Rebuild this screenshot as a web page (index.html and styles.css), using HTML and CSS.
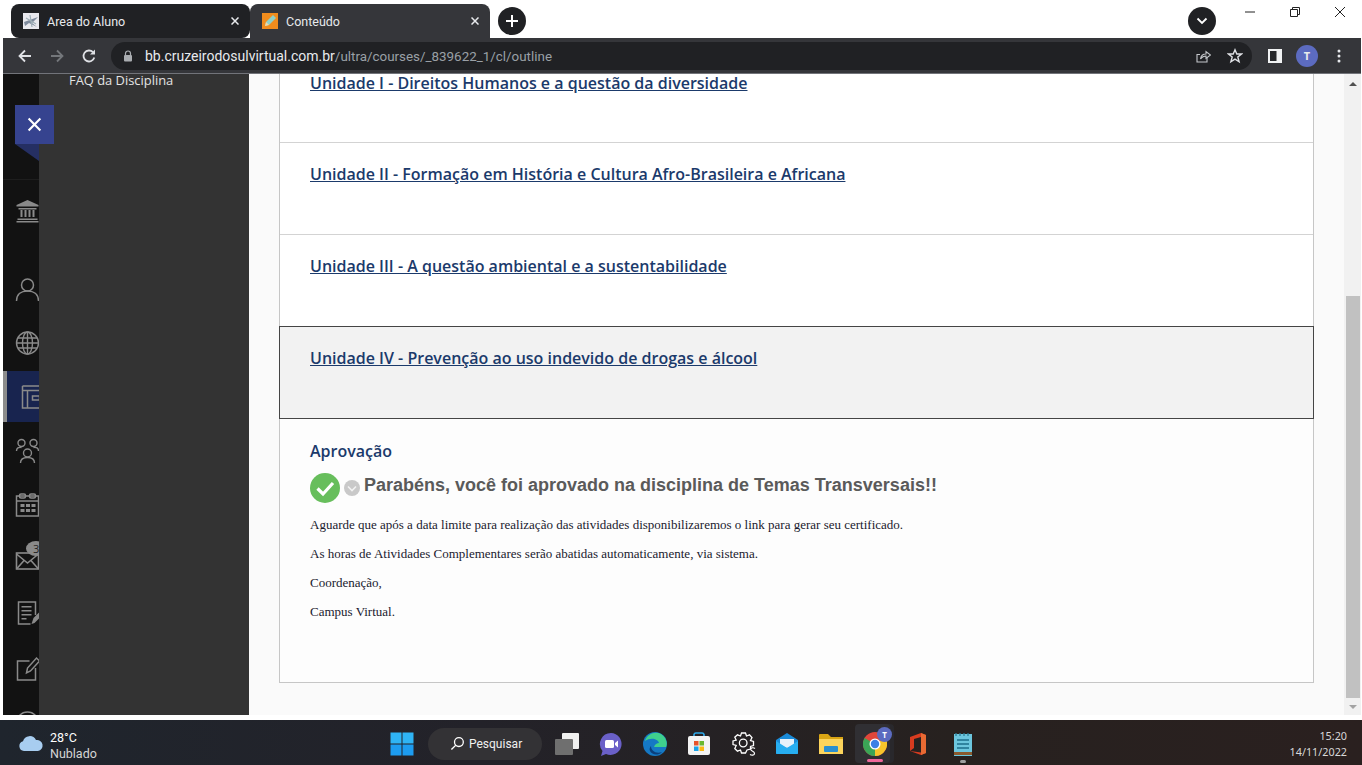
FILE: index.html
```html
<!DOCTYPE html>
<html lang="pt-BR">
<head>
<meta charset="utf-8">
<title>Conteúdo</title>
<link rel="stylesheet" href="styles.css">
</head>
<body>
<div class="tabstrip">
  <div class="tab tab-dark">
    <svg class="favicon" viewBox="0 0 16 16"><rect width="16" height="16" fill="#e9e9ee"/><path d="M1 9 L15 4 L9 10 L14 14 L6 10 L2 13Z" fill="#7e8a9c"/><path d="M7 2 L9 14 M3 5 L13 11" stroke="#9fb0b8" stroke-width="1.2"/></svg>
    <span class="tab-title">Area do Aluno</span>
    <svg class="tab-close" viewBox="0 0 8 8"><path d="M0.500 0.500L7.500 7.500M7.500 0.500L0.500 7.500" stroke="#e8eaed" stroke-width="1.500"/></svg>
  </div>
  <div class="tab tab-active">
    <svg class="favicon" viewBox="0 0 16 16"><rect width="16" height="16" fill="#f08c1d"/><path d="M3 13 L4 9 L11 2 L14 5 L7 12Z" fill="#8fd0c8"/><path d="M3 13 L4 9 L7 12Z" fill="#f6d7a0"/></svg>
    <span class="tab-title">Conteúdo</span>
    <svg class="tab-close" viewBox="0 0 8 8"><path d="M0.500 0.500L7.500 7.500M7.500 0.500L0.500 7.500" stroke="#e8eaed" stroke-width="1.500"/></svg>
  </div>
  <div class="newtab"><svg viewBox="0 0 14 14" width="14" height="14"><path d="M7 1V13M1 7H13" stroke="#fff" stroke-width="2"/></svg></div>
  <div class="strip-spacer"></div>
  <div class="tabsearch"><svg viewBox="0 0 12 8" width="12" height="8"><path d="M1.500 1.500 L6 6 L10.500 1.500" fill="none" stroke="#fff" stroke-width="1.800"/></svg></div>
  <div class="winctl">
    <svg viewBox="0 0 12 12" width="12" height="12"><path d="M1 6H11" stroke="#222" stroke-width="1"/></svg>
    <svg viewBox="0 0 12 12" width="12" height="12"><path d="M1.500 3.500H8.500V10.500H1.500Z M3.500 3.500V1.500H10.500V8.500H8.500" fill="none" stroke="#222" stroke-width="1"/></svg>
    <svg viewBox="0 0 12 12" width="12" height="12"><path d="M1 1L11 11M11 1L1 11" stroke="#222" stroke-width="1"/></svg>
  </div>
</div>

<div class="toolbar">
  <svg class="nav" viewBox="0 0 16 16"><path d="M14 8H2.500M8 2.500L2.500 8L8 13.500" fill="none" stroke="#dfe1e5" stroke-width="1.800"/></svg>
  <svg class="nav" viewBox="0 0 16 16"><path d="M2 8H13.500M8 2.500L13.500 8L8 13.500" fill="none" stroke="#74777b" stroke-width="1.800"/></svg>
  <svg class="nav" viewBox="0 0 16 16"><path d="M13.300 9.500A5.500 5.500 0 1 1 12 4.200" fill="none" stroke="#dfe1e5" stroke-width="1.800"/><path d="M14 1.500V6.500H9Z" fill="#dfe1e5"/></svg>
  <div class="omnibox">
    <svg class="lock" viewBox="0 0 10 12"><path d="M2.500 5V3.500A2.500 2.500 0 0 1 7.500 3.500V5" fill="none" stroke="#aaadb1" stroke-width="1.200"/><rect x="1" y="5" width="8" height="6.500" rx="1" fill="#aaadb1"/></svg>
    <span class="url"><span class="url-host">bb.cruzeirodosulvirtual.com.br</span><span class="url-path">/ultra/courses/_839622_1/cl/outline</span></span>
    <span class="omni-spacer"></span>
    <svg class="omni-icon" viewBox="0 0 16 16"><path d="M12 9.500V14H2V6.500H5" fill="none" stroke="#c4c7cb" stroke-width="1.100"/><path d="M5.500 11C6 7.500 8.500 6 11 6V3.500L15.500 7L11 10.500V8C9 8 7 9 5.500 11Z" fill="none" stroke="#c4c7cb" stroke-width="1.100"/></svg>
    <svg class="omni-icon" viewBox="0 0 16 16"><path d="M8 1.800L9.800 6H14.500L10.800 9L12.100 13.800L8 11.200L3.900 13.800L5.200 9L1.500 6H6.200Z" fill="none" stroke="#dfe1e5" stroke-width="1.400"/></svg>
  </div>
  <svg class="side-icon" viewBox="0 0 14 14"><rect width="14" height="14" fill="#f1f3f4"/><rect x="2" y="2" width="6.500" height="10" fill="#26282b"/></svg>
  <div class="avatar">T</div>
  <svg class="kebab" viewBox="0 0 4 14"><circle cx="2" cy="2" r="1.500"/><circle cx="2" cy="7" r="1.500"/><circle cx="2" cy="12" r="1.500"/></svg>
</div>

<div class="main">
  <nav class="rail">
    <div class="rail-toggle">
      <div class="close-flag"><svg viewBox="0 0 14 14" width="15" height="15"><path d="M1.500 1.500L12.500 12.500M12.500 1.500L1.500 12.500" stroke="#fff" stroke-width="2"/></svg></div>
      <div class="flag-tail"></div>
    </div>
    <div class="rail-item r-bank"><svg viewBox="0 0 24 24"><path d="M12 1L23 6V7.500H1V6Z M3 9H21V10.500H3Z M5 11H7V18H5Z M9 11H11V18H9Z M13 11H15V18H13Z M17 11H19V18H17Z M2 19.500H22V21H2Z M1 22H23V23.500H1Z" fill="#8a8a8a"/></svg></div>
    <div class="rail-item r-person"><svg viewBox="0 0 24 24"><circle cx="12" cy="8" r="6" fill="none" stroke="#8a8a8a" stroke-width="1.500"/><path d="M1 24C1 17 6 14 12 14S23 17 23 24" fill="none" stroke="#8a8a8a" stroke-width="1.500"/></svg></div>
    <div class="rail-item r-globe"><svg viewBox="0 0 24 24"><g fill="none" stroke="#8a8a8a" stroke-width="1.400"><circle cx="12" cy="12" r="11"/><ellipse cx="12" cy="12" rx="5" ry="11"/><path d="M12 1V23M1 12H23M2.500 7H21.500M2.500 17H21.500"/></g></svg></div>
    <div class="rail-item rail-active"><svg viewBox="0 0 24 24"><g fill="none" stroke="#8a8a8a" stroke-width="1.500"><path d="M1 1H23M1 5.500H23M1 1V23H23M6 5.500V23M21 5.500V23"/><rect x="11" y="11" width="7" height="4"/></g></svg></div>
    <div class="rail-item r-people"><svg viewBox="0 0 24 24"><g fill="none" stroke="#8a8a8a" stroke-width="1.400"><circle cx="6" cy="4" r="3.500"/><circle cx="18" cy="4" r="3.500"/><circle cx="12" cy="14" r="4"/><path d="M1 12C1 9 3 8 6 8.500M23 12C23 9 21 8 18 8.500M5 24C5 20 8 18.500 12 18.500S19 20 19 24"/></g></svg></div>
    <div class="rail-item r-cal"><svg viewBox="0 0 24 24"><g fill="none" stroke="#8a8a8a" stroke-width="1.500"><rect x="1" y="3" width="22" height="20"/><path d="M1 8H23"/><rect x="4" y="1" width="6" height="4" rx="1.500"/><rect x="14" y="1" width="6" height="4" rx="1.500"/></g><path d="M5 11H9V14H5Z M10.500 11H14.500V14H10.500Z M16 11H20V14H16Z M5 16H9V19H5Z M10.500 16H14.500V19H10.500Z M16 16H20V19H16Z" fill="#8a8a8a"/></svg></div>
    <div class="rail-item r-mail"><svg viewBox="0 0 24 24"><g fill="none" stroke="#8a8a8a" stroke-width="1.600"><rect x="1" y="6" width="22" height="16"/><path d="M1 7L12 16L23 7M1 22L9 13M23 22L15 13"/></g></svg><span class="badge">3</span></div>
    <div class="rail-item r-note"><svg viewBox="0 0 24 24"><g fill="none" stroke="#8a8a8a" stroke-width="1.500"><path d="M20 14V1H3V23H15"/></g><path d="M6 5H16V6.500H6Z M6 9H16V10.500H6Z M6 13H16V14.500H6Z M6 17H11V18.500H6Z" fill="#8a8a8a"/><path d="M16 23L18 17L24 11V17L19 22Z" fill="#8a8a8a"/></svg></div>
    <div class="rail-item r-edit"><svg viewBox="0 0 24 24"><g fill="none" stroke="#8a8a8a" stroke-width="1.500"><path d="M14 4H2V23H20V11"/><path d="M11 16L12 11L21 1L24 4L15 14Z"/></g></svg></div>
    <div class="rail-item r-last"><svg viewBox="0 0 24 24"><circle cx="12" cy="12" r="11" fill="none" stroke="#8a8a8a" stroke-width="1.500"/></svg></div>
  </nav>
  <aside class="panel"><a class="panel-link">FAQ da Disciplina</a></aside>
  <section class="content">
    <div class="card">
      <div class="unit unit-first"><a>Unidade I - Direitos Humanos e a questão da diversidade</a></div>
      <div class="unit"><a>Unidade II - Formação em História e Cultura Afro-Brasileira e Africana</a></div>
      <div class="unit"><a>Unidade III - A questão ambiental e a sustentabilidade</a></div>
      <div class="unit unit-hover"><a>Unidade IV - Prevenção ao uso indevido de drogas e álcool</a></div>
      <div class="approval">
        <h3>Aprovação</h3>
        <div class="approval-head">
          <svg class="check" viewBox="0 0 30 30"><circle cx="15" cy="15" r="15" fill="#67be5c"/><path d="M7.500 15.500L13 21L23 10" fill="none" stroke="#fff" stroke-width="3.200"/></svg>
          <svg class="chev" viewBox="0 0 16 16"><circle cx="8" cy="8" r="8" fill="#c9c9c9"/><path d="M4 6.500L8 10.500L12 6.500" fill="none" stroke="#f2f2f2" stroke-width="1.600"/></svg>
          <span class="approval-title">Parabéns, você foi aprovado na disciplina de Temas Transversais!!</span>
        </div>
        <p>Aguarde que após a data limite para realização das atividades disponibilizaremos o link para gerar seu certificado.</p>
        <p>As horas de Atividades Complementares serão abatidas automaticamente, via sistema.</p>
        <p>Coordenação,</p>
        <p>Campus Virtual.</p>
      </div>
    </div>
  </section>
  <div class="scrollbar">
    <div class="sb-up"></div>
    <div class="sb-track"><div class="sb-thumb"></div></div>
    <div class="sb-down"></div>
  </div>
</div>

<footer class="taskbar">
  <div class="weather">
    <svg viewBox="0 0 26 18" width="26" height="18"><path d="M6 17A5 5 0 0 1 5 7.200A7 7 0 0 1 18 6A5.500 5.500 0 0 1 20 17Z" fill="#a8cdf0"/></svg>
    <div class="weather-text"><span class="temp">28°C</span><span class="cond">Nublado</span></div>
  </div>
  <div class="tb-center">
    <svg class="tb-icon" viewBox="0 0 24 24"><g fill="#2fb4f5"><rect x="0.500" y="0.500" width="11" height="11"/><rect x="12.500" y="0.500" width="11" height="11"/><rect x="0.500" y="12.500" width="11" height="11" fill="#1d9cf0"/><rect x="12.500" y="12.500" width="11" height="11" fill="#1d9cf0"/></g></svg>
    <div class="tb-search">
      <svg viewBox="0 0 16 16" width="15" height="15"><circle cx="9.500" cy="6.500" r="4.700" fill="none" stroke="#fff" stroke-width="1.400"/><path d="M6 10L1.500 14.500" stroke="#fff" stroke-width="1.500"/></svg>
      <span>Pesquisar</span>
    </div>
    <svg class="tb-icon i-tv" viewBox="0 0 24 24"><rect x="7" y="1" width="17" height="16" rx="1" fill="#f0f0f0"/><rect x="0" y="7" width="18" height="16" rx="1" fill="#6f6f6f"/></svg>
    <svg class="tb-icon i-teams" viewBox="0 0 24 24"><path d="M12 1A11 11 0 1 1 7 22L2 24L3.500 19A11 11 0 0 1 12 1Z" fill="#6a60c8"/><rect x="6" y="8" width="9" height="8" rx="1.500" fill="#fff"/><path d="M16 11L19 8.500V15.500L16 13Z" fill="#fff"/></svg>
    <svg class="tb-icon i-edge" viewBox="0 0 24 24"><circle cx="12" cy="12" r="12" fill="#1578c4"/><path d="M2 9C4 2 12-1 18 2C23 5 25 11 23 15H11C12 12 14 11 16 11C15 7 8 5 2 9Z" fill="#3fd08d"/><path d="M8 14C8 19 13 22 19 20C15 24 9 23 7 19C6 17 7 15 8 14Z" fill="#0b3f7c"/></svg>
    <svg class="tb-icon i-store" viewBox="0 0 24 24"><path d="M7 5V2.500A2 2 0 0 1 9 1H15A2 2 0 0 1 17 2.500V5" fill="none" stroke="#2da8e8" stroke-width="1.600"/><rect x="1" y="4" width="22" height="19" rx="2" fill="#f3f3f3"/><rect x="7" y="9" width="4.500" height="4.500" fill="#e8532a"/><rect x="12.500" y="9" width="4.500" height="4.500" fill="#6ab82f"/><rect x="7" y="14.500" width="4.500" height="4.500" fill="#1aa2e8"/><rect x="12.500" y="14.500" width="4.500" height="4.500" fill="#fbb914"/></svg>
    <svg class="tb-icon i-gear" viewBox="0 0 24 24"><g fill="none" stroke="#fff" stroke-width="1.300"><path d="M9.500 1H13.500L14.500 4L17.500 2.800L20 5.500L18.500 8.500L21.500 9.500V13.500L18.500 14.500V17L15 18L13.500 21H9.500L8.500 18L5.500 19.200L2.800 16.500L4.200 13.500L1 12.500V9L4.200 8L2.800 5.200L5.500 2.800L8.500 4Z"/><circle cx="11.200" cy="11" r="3.800"/></g><path d="M23 16.500C21 15 18 16 19 18C20 19.500 22.500 19.500 22.500 21.500C22.500 23.500 19.500 23.500 18 22.500" fill="none" stroke="#fff" stroke-width="1.200"/></svg>
    <svg class="tb-icon i-mail" viewBox="0 0 24 24"><path d="M1 8L12 1L23 8V21A1 1 0 0 1 22 22H2A1 1 0 0 1 1 21Z" fill="#1a8bd8"/><path d="M5 7H19V13L12 16L5 13Z" fill="#e8f2fa"/><path d="M1 9L12 16L23 9V21A1 1 0 0 1 22 22H2A1 1 0 0 1 1 21Z" fill="#27aef0"/></svg>
    <svg class="tb-icon i-folder" viewBox="0 0 24 24"><path d="M0 3A1 1 0 0 1 1 2H9L12 5H24V22H0Z" fill="#d9a514"/><rect y="7" width="24" height="15" fill="#fcd45c"/><rect x="5" y="14" width="14" height="6" rx="1" fill="#2a8fd0"/></svg>
    <div class="tb-chrome">
      <svg viewBox="0 0 24 24" width="24" height="24"><circle cx="12" cy="12" r="12" fill="#e0463a"/><path d="M12 12L22.400 6A12 12 0 0 1 12 24Z" fill="#f7c52b"/><path d="M12 12L12 24A12 12 0 0 1 1.600 6Z" fill="#3ba556"/><circle cx="12" cy="12" r="5.500" fill="#fff"/><circle cx="12" cy="12" r="4.200" fill="#3d7fe6"/></svg>
      <span class="chrome-badge">T</span>
      <span class="chrome-bar"></span>
    </div>
    <svg class="i-office" viewBox="3 0 18 24"><path d="M4 5L15 1L20 3V21L15 23L4 19L15 20.500V5L8 7V16L4 19Z" fill="#d83b1f"/><path d="M15 1L20 3V21L15 23Z" fill="#e86a33"/></svg>
    <div class="tb-notepad">
      <svg viewBox="0 0 18 24" width="18" height="24"><rect y="2" width="18" height="22" fill="#6cc6de"/><rect y="20" width="18" height="3" fill="#8a5a2e"/><path d="M2 1V4M6 1V4M10 1V4M14 1V4" stroke="#2d7f96" stroke-width="1.300"/><path d="M3 8H15M3 12H15M3 16H15" stroke="#1c6f8c" stroke-width="1.700"/></svg>
      <span class="np-dot"></span>
    </div>
  </div>
  <div class="clock"><span>15:20</span><span>14/11/2022</span></div>
</footer>
</body>
</html>
```
FILE: styles.css
```css
* { box-sizing: border-box; }
html, body { margin: 0; padding: 0; }
body {
  width: 1362px;
  height: 765px;
  overflow: hidden;
  background: #fff;
  font-family: "Open Sans", sans-serif;
  display: flex;
  flex-direction: column;
}

/* tab strip */
.tabstrip {
  height: 38px;
  display: flex;
  align-items: flex-start;
  padding: 4px 0 0 11px;
  background: #fff;
}
.tab {
  width: 239px;
  height: 34px;
  border-radius: 8px 8px 0 0;
  display: flex;
  align-items: center;
  padding: 0 11px 0 12px;
  font: 12.5px Roboto, "Noto Sans", sans-serif;
}
.tab-dark { background: #202124; color: #e8eaed; border-radius: 8px; }
.tab-active { background: #35363a; color: #e8eaed; width: 240px; }
.favicon { width: 16px; height: 16px; margin-right: 8px; flex: none; }
.tab-title { flex: 1; }
.tab-close { width: 8px; height: 8px; flex: none; }
.newtab, .tabsearch {
  width: 28px;
  height: 28px;
  border-radius: 50%;
  background: #202124;
  display: flex;
  align-items: center;
  justify-content: center;
  flex: none;
}
.newtab { margin: 3px 0 0 8px; }
.tabsearch { margin-top: 3px; }
.strip-spacer { flex: 1; }
.winctl {
  display: flex;
  gap: 33px;
  padding: 2px 16px 0 28px;
}

/* toolbar */
.toolbar {
  height: 36px;
  margin-left: 3px;
  margin-right: 1px;
  background: #35363a;
  border-bottom: 1px solid #72747a;
  display: flex;
  align-items: center;
  padding-left: 14px;
  flex: none;
}
.nav { width: 16px; height: 16px; margin-right: 16px; flex: none; }
.omnibox {
  width: 1141px;
  height: 28px;
  margin-left: -2px;
  border-radius: 14px;
  background: #202124;
  display: flex;
  align-items: center;
  padding: 0 9px 0 12px;
  font: 14px Roboto, "Noto Sans", sans-serif;
  color: #9aa0a6;
}
.lock { width: 10px; height: 12px; margin-right: 12px; }
.url-host { color: #e8eaed; }
.url-path { font-size: 13.4px; }
.omni-spacer { flex: 1; }
.omni-icon { width: 16px; height: 16px; margin-left: 16px; }
.side-icon { width: 14px; height: 14px; margin-left: 16px; }
.avatar {
  width: 22px;
  height: 22px;
  margin-left: 14px;
  border-radius: 50%;
  background: #5c6bc0;
  color: #e8eaed;
  font: bold 11px "Noto Sans", sans-serif;
  display: flex;
  align-items: center;
  justify-content: center;
}
.kebab { width: 4px; height: 14px; margin-left: 19px; fill: #e8eaed; }

/* main */
.main {
  height: 641px;
  display: flex;
  flex: none;
  margin-left: 3px;
  margin-right: 1px;
}
.rail {
  width: 36px;
  flex: none;
  background: #121212;
  display: flex;
  flex-direction: column;
  overflow-x: visible;
  overflow-y: clip;
}
.rail-toggle {
  height: 106px;
  flex: none;
  padding: 31px 0 0 12px;
  border-bottom: 1px solid #1e1e1e;
  position: relative;
  z-index: 3;
}
.close-flag {
  width: 39px;
  height: 39px;
  background: #36438f;
  display: flex;
  align-items: center;
  justify-content: center;
}
.flag-tail {
  width: 0;
  height: 0;
  border-top: 17px solid #252f63;
  border-left: 24px solid transparent;
}
.rail-item {
  height: 54px;
  flex: none;
  padding-left: 12px;
  display: flex;
  align-items: center;
  position: relative;
}
.rail-item svg { width: 25px; height: 24px; flex: none; overflow: visible; }
.r-bank { height: 52px; margin: 5px 0 25px; }
.rail-active {
  height: 51px;
  margin: 1px 0 2px;
  background: #18244f;
  border-left: 4px solid #8c8c8c;
  padding-left: 14px;
}
.r-edit { margin-top: 2px; }
.badge {
  position: absolute;
  left: 23px;
  top: 9px;
  width: 20px;
  height: 15px;
  border-radius: 50%;
  background: #8a8a8a;
  color: #222;
  font: 11px/15px "Open Sans", sans-serif;
  padding-left: 7px;
}
.panel {
  width: 210px;
  flex: none;
  background: #333;
  color: #e4e4e4;
  font: 12.9px "Open Sans", sans-serif;
  padding-left: 30px;
  position: relative;
  z-index: 2;
}
.panel-link { display: block; line-height: 12px; }

.content {
  flex: 1;
  background: #fafafa;
  padding: 0 30px;
}
.card {
  border: 1px solid #c6c6c6;
  border-top: 0;
  height: 609px;
  background: #fdfdfd;
}
.unit {
  height: 92px;
  padding: 20px 0 0 30px;
  border-bottom: 1px solid #d3d3d3;
  background: #fff;
  font: 600 16px/22px "Open Sans", sans-serif;
  color: #1b3a6b;
}
.unit a { text-decoration: underline; }
.unit-first { height: 69px; padding-top: 0; line-height: 18px; }
.unit-hover {
  margin: -1px -1px 0;
  height: 93px;
  background: #f2f2f2;
  border: 1px solid #454545;
}
.approval { padding: 21px 30px 0; }
.approval h3 {
  margin: 0;
  font: 600 16px/22px "Open Sans", sans-serif;
  color: #1b3a6b;
}
.approval-head {
  display: flex;
  align-items: center;
  margin-top: 11px;
  height: 30px;
}
.check { width: 30px; height: 30px; flex: none; }
.chev { width: 16px; height: 16px; margin: 0 4px; flex: none; }
.approval-title {
  font: bold 18px "Liberation Sans", sans-serif;
  color: #5a5a5a;
  white-space: nowrap;
  margin-bottom: 5px;
}
.approval p {
  margin: 0;
  font: 13px/15px "Liberation Serif", serif;
  color: #1a1a2e;
  height: 29px;
}
.approval-head + p { margin-top: 14px; }

/* scrollbar */
.scrollbar {
  width: 17px;
  flex: none;
  background: #f1f1f1;
  display: flex;
  flex-direction: column;
}
.sb-up, .sb-down { height: 17px; position: relative; flex: none; }
.sb-up::after, .sb-down::after {
  content: "";
  position: absolute;
  left: 5px;
  border-left: 4px solid transparent;
  border-right: 4px solid transparent;
}
.sb-up::after { top: 8px; border-bottom: 4px solid #505050; }
.sb-down::after { top: 7px; border-top: 4px solid #a3a3a3; }
.sb-track { flex: 1; padding: 205px 1px 0 2px; }
.sb-thumb { height: 402px; background: #c1c1c1; }

/* taskbar */
.taskbar {
  margin-top: 5px;
  height: 45px;
  flex: none;
  background: linear-gradient(90deg, #1f252d 0%, #232229 35%, #27211f 70%, #2a201f 100%);
  display: flex;
  align-items: center;
  color: #fff;
  font: 11px "Noto Sans", sans-serif;
}
.weather { display: flex; align-items: center; gap: 6px; padding-left: 18px; width: 390px; flex: none; }
.weather-text { display: flex; flex-direction: column; font: 12.5px/16px Roboto, sans-serif; padding-top: 6px; }
.temp { color: #fff; }
.cond { color: #d5d5d5; }
.tb-center { display: flex; align-items: center; flex: none; width: 600px; padding-top: 2px; }
.tb-icon { width: 24px; height: 24px; flex: none; }
.tb-search {
  width: 114px;
  height: 32px;
  margin-left: 14px;
  border-radius: 16px;
  background: #333235;
  display: flex;
  align-items: center;
  gap: 4px;
  padding-left: 22px;
  font: 12px Roboto, sans-serif;
  color: #f0f0f0;
  flex: none;
}
.i-tv { margin-left: 13px; }
.i-teams { margin-left: 20px; }
.i-edge { margin-left: 20px; }
.i-store { margin-left: 20px; }
.i-gear { margin-left: 21px; }
.i-mail { margin-left: 19px; }
.i-folder { margin-left: 20px; }
.tb-chrome {
  position: relative;
  width: 35px;
  height: 39px;
  margin-left: 12px;
  background: #302f33;
  border-radius: 4px;
  box-shadow: 4px 0 0 #29282c;
  display: flex;
  align-items: center;
  padding-left: 8px;
  flex: none;
}
.chrome-badge {
  position: absolute;
  left: 22px;
  top: 3px;
  width: 15px;
  height: 15px;
  border-radius: 50%;
  background: #5c6bc0;
  font: bold 8px/15px "Noto Sans", sans-serif;
  text-align: center;
}
.chrome-bar {
  position: absolute;
  left: 12px;
  bottom: 1px;
  width: 16px;
  height: 3px;
  border-radius: 2px;
  background: #f0679a;
}
.i-office { width: 18px; height: 24px; margin-left: 19px; flex: none; }
.tb-notepad {
  position: relative;
  margin-left: 27px;
  width: 18px;
  height: 24px;
  flex: none;
}
.np-dot {
  position: absolute;
  left: 6px;
  top: 28px;
  width: 6px;
  height: 3px;
  border-radius: 2px;
  background: #a0a0a0;
}
.clock {
  margin-left: auto;
  padding: 2px 15px 0 0;
  display: flex;
  flex-direction: column;
  align-items: flex-end;
  font-size: 10.8px;
  line-height: 16px;
  color: #d8d8d8;
}
```
